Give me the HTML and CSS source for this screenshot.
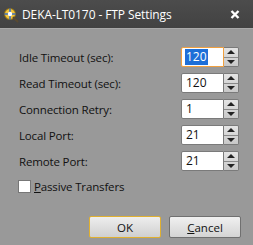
FILE: index.html
```html
<!DOCTYPE html>
<html>
<head>
<meta charset="utf-8">
<link rel="stylesheet" href="styles.css">
</head>
<body>
<div class="window">
  <div class="titlebar">
    <svg class="app-icon" width="16" height="16" viewBox="0 0 16 16">
      <circle cx="7" cy="7" r="5.5" fill="#f2c53d" stroke="#8a6a10" stroke-width="1"/>
      <path d="M7 1.5v11M1.5 7h11" stroke="#3a6fc0" stroke-width="1.6"/>
      <circle cx="7" cy="7" r="2.2" fill="#ffffff"/>
      <path d="M10.5 10.5l4 4" stroke="#5a4a30" stroke-width="2" stroke-linecap="round"/>
    </svg>
    <span class="title">DEKA-LT0170 - FTP Settings</span>
    <svg class="close" width="10" height="9" viewBox="0 0 10 9">
      <path d="M1.5 1l7 7M8.5 1l-7 7" stroke="#ffffff" stroke-width="2.4"/>
    </svg>
  </div>
  <div class="content">
    <div class="form">
      <label class="label">Idle Timeout (sec):</label>
      <div class="spin focused"><div class="field"><span class="sel">120</span></div><div class="btns"><div class="up"></div><div class="down"></div></div></div>
      <label class="label">Read Timeout (sec):</label>
      <div class="spin"><div class="field">120</div><div class="btns"><div class="up"></div><div class="down"></div></div></div>
      <label class="label">Connection Retry:</label>
      <div class="spin"><div class="field">1</div><div class="btns"><div class="up"></div><div class="down"></div></div></div>
      <label class="label">Local Port:</label>
      <div class="spin"><div class="field">21</div><div class="btns"><div class="up"></div><div class="down"></div></div></div>
      <label class="label">Remote Port:</label>
      <div class="spin"><div class="field">21</div><div class="btns"><div class="up"></div><div class="down"></div></div></div>
    </div>
    <div class="check"><span class="box"></span><span class="check-label"><u>P</u>assive Transfers</span></div>
    <div class="buttons">
      <button class="btn default">OK</button>
      <button class="btn"><u>C</u>ancel</button>
    </div>
  </div>
</div>
</body>
</html>
```
FILE: styles.css
```css
html, body {
  margin: 0;
  padding: 0;
  background: #999999;
}
.window {
  width: 253px;
  height: 245px;
  font-family: "Open Sans", "Noto Sans", sans-serif;
  font-size: 11.5px;
  color: #111;
  display: flex;
  flex-direction: column;
}
.titlebar {
  height: 28px;
  background: linear-gradient(#4c4c4c, #424242);
  border-bottom: 1px solid #a8a8a8;
  display: flex;
  align-items: center;
  padding-left: 3px;
  padding-right: 13px;
  color: #fff;
  box-sizing: content-box;
}
.app-icon {
  margin-right: 3px;
  margin-top: 1px;
}
.title {
  flex: 1;
  font-size: 12px;
  letter-spacing: -0.1px;
}
.close {
  margin-top: 1px;
}
.content {
  flex: 1;
  padding: 18px 0 0 19px;
  display: flex;
  flex-direction: column;
}
.form {
  display: grid;
  grid-template-columns: 162px 58px;
  row-gap: 6px;
  align-items: center;
}
.label {
  letter-spacing: -0.15px;
}
.spin {
  display: flex;
  height: 20px;
}
.field {
  width: 43px;
  box-sizing: border-box;
  background: #fff;
  border: 1px solid #7a7a7a;
  border-radius: 2px 0 0 2px;
  padding-left: 4px;
  font-size: 12px;
  line-height: 18px;
}
.focused .field {
  border-color: #f0a040;
  padding-left: 3px;
}
.sel {
  background: #1e6fd8;
  color: #fff;
  display: inline-block;
  line-height: 16px;
  padding: 0 1px;
}
.btns {
  width: 15px;
  display: flex;
  flex-direction: column;
  border: 1px solid #7a7a7a;
  border-left: none;
  box-sizing: border-box;
  border-radius: 0 2px 2px 0;
  background: linear-gradient(#e4e4e4, #c8c8c8);
}
.up, .down {
  flex: 1;
  display: flex;
  align-items: center;
  justify-content: center;
}
.up { border-bottom: 1px solid #8a8a8a; }
.up::after {
  content: "";
  border-left: 4px solid transparent;
  border-right: 4px solid transparent;
  border-bottom: 4px solid #222;
}
.down::after {
  content: "";
  border-left: 4px solid transparent;
  border-right: 4px solid transparent;
  border-top: 4px solid #222;
}
.check {
  display: flex;
  align-items: center;
  margin-top: 8px;
  margin-left: -1px;
}
.box {
  width: 13px;
  height: 13px;
  background: #fff;
  border: 1px solid #777;
  box-sizing: border-box;
  margin-right: 3px;
}
.check-label {
  letter-spacing: -0.15px;
}
.buttons {
  display: flex;
  justify-content: flex-end;
  gap: 8px;
  padding-right: 12px;
  margin-top: 22px;
}
.btn {
  width: 72px;
  height: 22px;
  font-family: "Open Sans", "Noto Sans", sans-serif;
  font-size: 11.5px;
  color: #111;
  border: 1px solid #707070;
  border-radius: 2px;
  background: linear-gradient(#f0f0f0, #d4d4d4);
  padding: 0;
}
.btn.default {
  border-color: #e0b030;
  background: linear-gradient(#eeeeee, #d0d0d0);
}
```
